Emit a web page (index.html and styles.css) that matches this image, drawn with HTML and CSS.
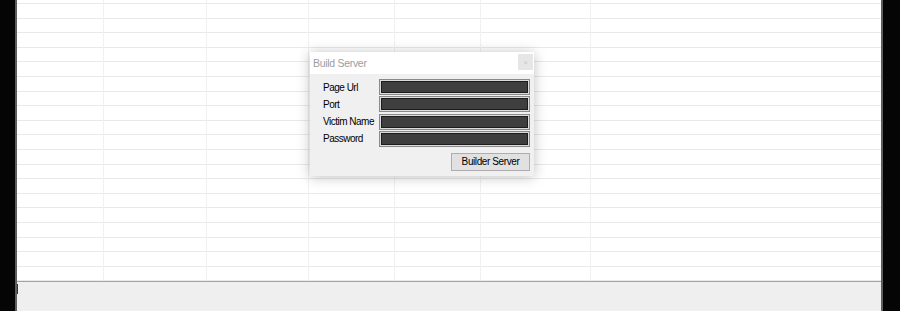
FILE: index.html
```html
<!DOCTYPE html>
<html lang="en">

<head>
    <meta charset="UTF-8">
    <meta name="viewport" content="width=device-width, initial-scale=1.0">
    <title>Build Server</title>
    <link rel="stylesheet" href="styles.css">
</head>

<body>
    <div class="frame">
        <div class="edge"></div>
        <div class="main">
            <div class="sheet">
                <div class="col" style="width: 86px"></div>
                <div class="col" style="width: 102px"></div>
                <div class="col" style="width: 101px"></div>
                <div class="col" style="width: 85px"></div>
                <div class="col" style="width: 85px"></div>
                <div class="col" style="width: 109px"></div>

                <!-- build dialog floats over the grid -->
                <div class="dialog">
                    <div class="titlebar">
                        <span class="title">Build Server</span>
                        <div class="close">&#215;</div>
                    </div>
                    <div class="body">
                        <div class="fields">
                            <label>Page Url</label>
                            <div class="field"></div>
                            <label>Port</label>
                            <div class="field"></div>
                            <label>Victim Name</label>
                            <div class="field"></div>
                            <label>Password</label>
                            <div class="field"></div>
                        </div>
                        <div class="actions">
                            <button>Builder Server</button>
                        </div>
                    </div>
                </div>
            </div>
            <div class="status">
                <div class="caret"></div>
            </div>
        </div>
        <div class="edge right"></div>
    </div>
</body>

</html>
```

FILE: styles.css
```css
body {
    margin: 0;
    background-color: #050505;
    font-family: "Liberation Sans", Arial, sans-serif;
}

.frame {
    display: flex;
    height: 311px;
    padding-left: 15px;
    padding-right: 17px;
}

.edge {
    width: 2px;
    background-color: #5e5e5e;
}

.main {
    flex: 1;
    display: flex;
    flex-direction: column;
}

.sheet {
    position: relative;
    display: flex;
    height: 281px;
    background-color: #fff;
    background-image: repeating-linear-gradient(#e9e9e9 0 1px, transparent 1px 14.6px);
    background-position: 0 3px;
}

.col {
    border-right: 1px solid #f0f0f0;
    flex-shrink: 0;
}

.status {
    flex: 1;
    border-top: 1px solid #a3a3aa;
    background-color: #efefef;
    padding-top: 2px;
}

.caret {
    width: 1px;
    height: 10px;
    background-color: #333;
}

.dialog {
    position: absolute;
    left: 293px;
    top: 52px;
    width: 224px;
    background-color: #f0f0f0;
    box-shadow: 0 1px 12px rgba(0, 0, 0, 0.25);
}

.titlebar {
    position: relative;
    height: 22px;
    background-color: #fff;
    display: flex;
    align-items: center;
    padding-left: 3px;
}

.title {
    font-size: 10.5px;
    color: #9c9c9c;
    letter-spacing: -0.3px;
}

.close {
    position: absolute;
    right: 1px;
    top: 2px;
    width: 15px;
    height: 16px;
    background-color: #e6e6e6;
    color: #c8c8c8;
    font-size: 8px;
    display: flex;
    justify-content: center;
    align-items: center;
}

.body {
    padding: 5px 4px 5px 13px;
}

.fields {
    display: grid;
    grid-template-columns: 56px 1fr;
    row-gap: 1.33px;
    align-items: center;
}

label {
    font-size: 10px;
    color: #000;
    letter-spacing: -0.5px;
}

.field {
    height: 16px;
    box-sizing: border-box;
    border: 1px solid #8a8a8a;
    background-color: #3f3f3f;
    box-shadow: inset 0 0 0 1px #dcdcdc, inset 0 0 0 2px #1c1c1c;
}

.actions {
    display: flex;
    justify-content: flex-end;
    margin-top: 6px;
}

button {
    width: 79px;
    height: 18px;
    padding: 0;
    border: 1px solid #adadad;
    background-color: #e1e1e1;
    font-family: "Liberation Sans", Arial, sans-serif;
    font-size: 10px;
    letter-spacing: -0.4px;
    color: #000;
}
```
